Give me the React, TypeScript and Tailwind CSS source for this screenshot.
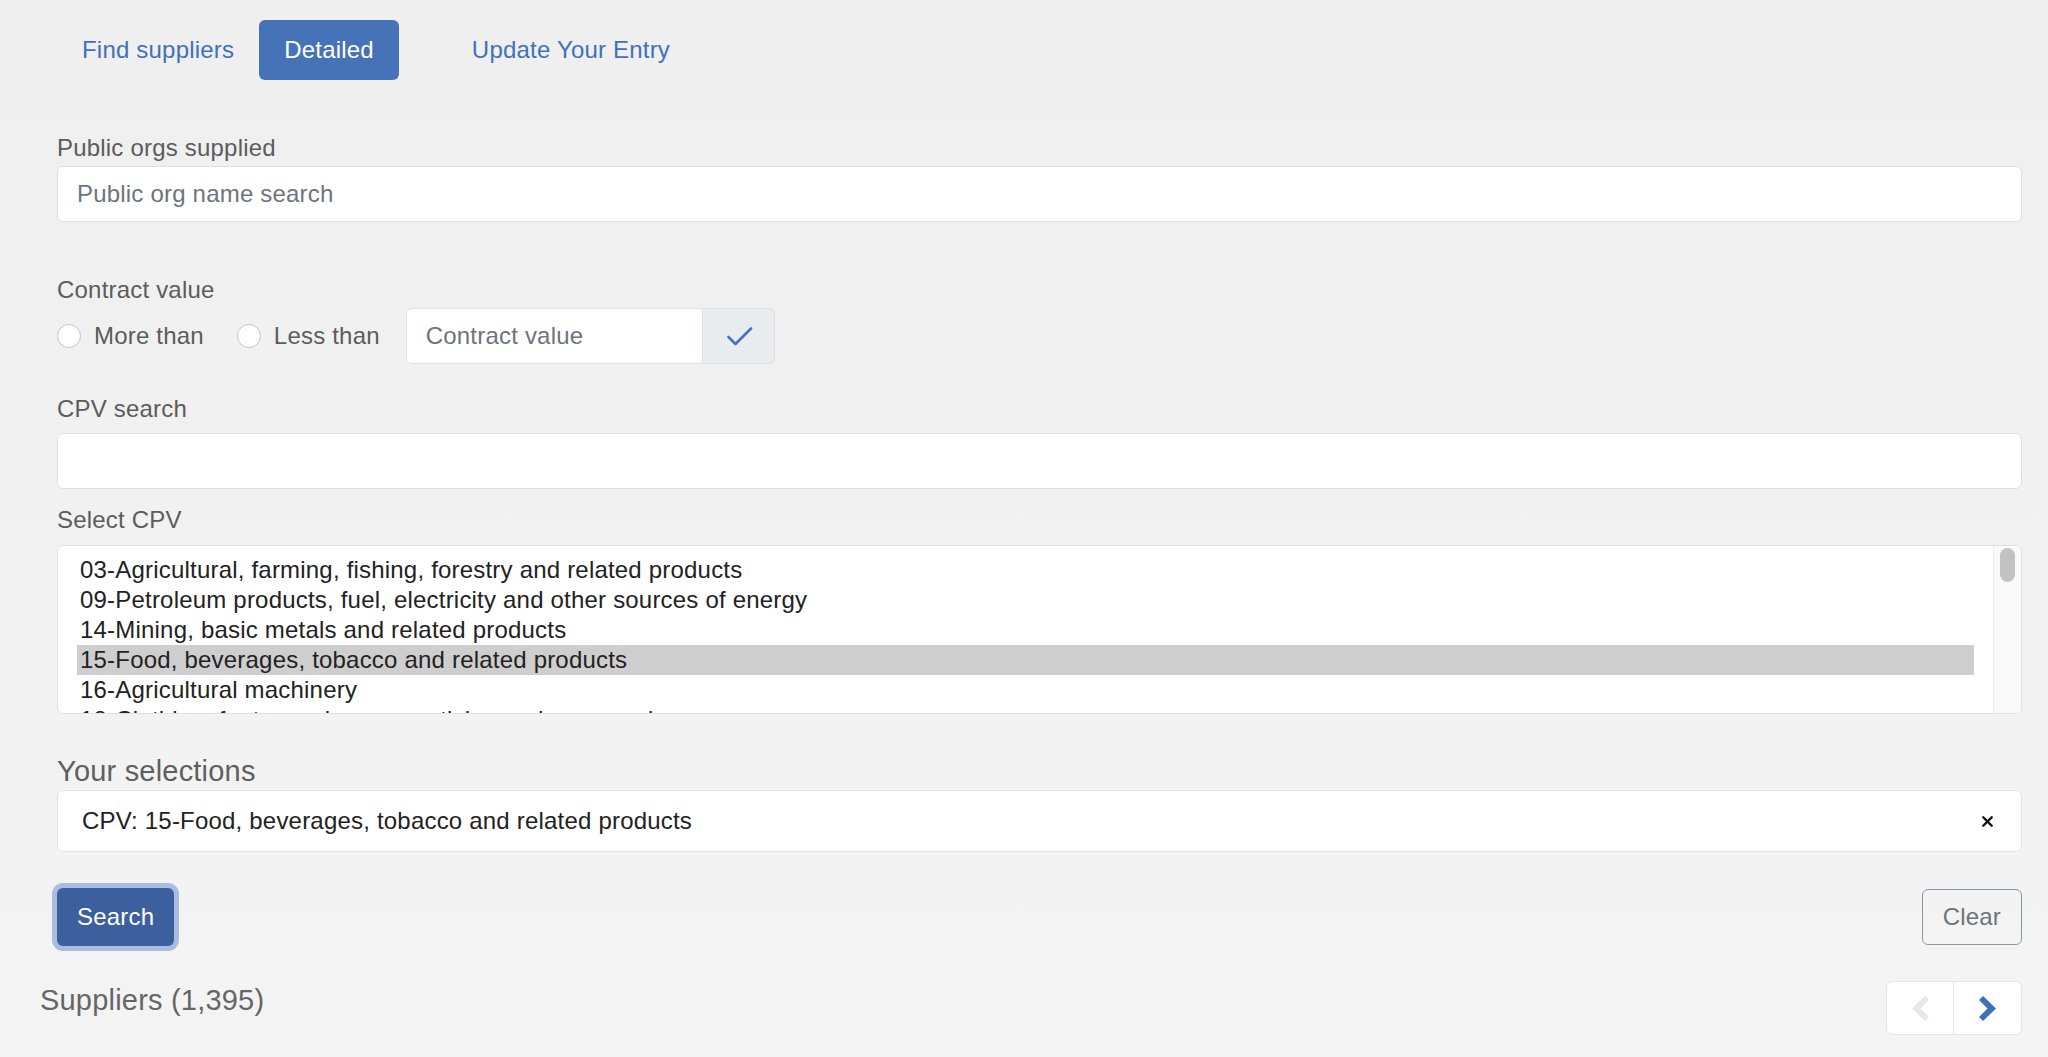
import { X } from "lucide-react";

const cpvItems = [
  "03-Agricultural, farming, fishing, forestry and related products",
  "09-Petroleum products, fuel, electricity and other sources of energy",
  "14-Mining, basic metals and related products",
  "15-Food, beverages, tobacco and related products",
  "16-Agricultural machinery",
  "18-Clothing, footwear, luggage articles and accessories",
  "19-Leather and textile fabrics, plastic and rubber materials",
  "22-Printed matter and related products",
];

function Chevron({ dir, color }: { dir: "left" | "right"; color: string }) {
  return (
    <svg width="17" height="25" viewBox="0 0 17 25" className={dir === "left" ? "-scale-x-100" : ""}>
      <polygon points="4,0 17,12.5 4,25 0,21 8.5,12.5 0,4" fill={color} />
    </svg>
  );
}

function Radio({ label }: { label: string }) {
  return (
    <label className="flex items-center gap-[13px] text-[#5c5c5c]">
      <span className="w-[24px] h-[24px] rounded-full bg-white border border-[#c4c4c4]" />
      <span>{label}</span>
    </label>
  );
}

export default function App() {
  return (
    <main className="min-h-screen w-full bg-linear-to-b from-[#efefef] to-[#f4f4f4] font-['Liberation_Sans',Arial,sans-serif] text-[24px] leading-[36px] tracking-[0.2px] pl-[40px] pr-[26px] pt-[20px]">
      <div className="pl-[17px]">
        {/* tabs */}
        <nav className="flex items-center h-[60px]">
          <a className="h-full flex items-center px-[25px] text-[#4170bd]">Find suppliers</a>
          <a className="h-full flex items-center px-[25px] rounded-[6px] bg-[#4672b8] text-white">Detailed</a>
          <a className="h-full flex items-center px-[25px] ml-[48px] text-[#4170bd]">Update Your Entry</a>
        </nav>

        <div className="mt-[50px] text-[#5c5c5c]">Public orgs supplied</div>
        <input
          className="block w-full h-[56px] px-[19px] bg-white border border-[#dde0e4] rounded-[6px] outline-none placeholder:text-[#6c757d]"
          placeholder="Public org name search"
        />

        <div className="mt-[50px] text-[#5c5c5c]">Contract value</div>
        <div className="flex items-center h-[56px]">
          <Radio label="More than" />
          <div className="ml-[33px]">
            <Radio label="Less than" />
          </div>
          <div className="ml-[26px] flex h-full">
            <input
              className="w-[297px] h-full px-[19px] bg-white border border-[#dde0e4] rounded-l-[6px] outline-none placeholder:text-[#6c757d]"
              placeholder="Contract value"
            />
            <button className="w-[72px] h-full flex items-center justify-center bg-[#e9ecef] border border-l-0 border-[#dde0e4] rounded-r-[6px]">
              <svg width="26" height="19" viewBox="0 0 26 19" fill="none" className="ml-[4px]">
                <path d="M1.5 10 L8.5 17 L24 1.5" stroke="#4472c4" strokeWidth="2.6" strokeLinecap="round" strokeLinejoin="round" />
              </svg>
            </button>
          </div>
        </div>

        <div className="mt-[27px] text-[#5c5c5c]">CPV search</div>
        <input className="block mt-[6px] w-full h-[56px] px-[19px] bg-white border border-[#dde0e4] rounded-[6px] outline-none" />

        <div className="mt-[13px] text-[#5c5c5c]">Select CPV</div>
        <div className="mt-[7px] flex h-[169px] bg-white border border-[#dde0e4] rounded-[6px] overflow-hidden">
          <ul className="flex-1 pt-[9px] pl-[19px] pr-[19px] leading-[30px] text-[#222] overflow-hidden">
            {cpvItems.map((item) => (
              <li key={item} className={`px-[3px] whitespace-nowrap ${item.startsWith("15-") ? "bg-[#cecece]" : ""}`}>
                {item}
              </li>
            ))}
          </ul>
          <div className="w-[28px] border-l border-[#ececec] bg-[#fafafa] flex justify-center pt-[2px]">
            <div className="w-[15px] h-[34px] rounded-full bg-[#c2c2c2]" />
          </div>
        </div>

        <div className="mt-[40px] text-[29px] leading-[35px] text-[#5f5f5f]">Your selections</div>
        <div className="mt-[1px] h-[62px] flex items-center justify-between pl-[24px] pr-[25px] bg-white border border-[#e3e3e3] rounded-[6px] text-[#222]">
          <span>CPV: 15-Food, beverages, tobacco and related products</span>
          <X size={17} strokeWidth={3.4} color="#111" />
        </div>

        <div className="mt-[36px] flex items-center justify-between">
          <button className="h-[58px] px-[20px] rounded-[6px] bg-[#3c5f9d] text-white shadow-[0_0_0_5px_#a9bde0]">Search</button>
          <button className="h-[56px] px-[20px] rounded-[6px] border border-[#8d959d] text-[#6c757d]">Clear</button>
        </div>
      </div>

      <div className="mt-[35px] flex items-center justify-between">
        <h2 className="text-[29px] leading-[35px] text-[#666] -mt-[16px]">Suppliers (1,395)</h2>
        <div className="flex h-[54px] bg-white border border-[#e4e4e4] rounded-[6px]">
          <button className="w-[67px] flex items-center justify-center border-r border-[#e4e4e4]">
            <Chevron dir="left" color="#e8e8e8" />
          </button>
          <button className="w-[67px] flex items-center justify-center">
            <Chevron dir="right" color="#3f6fba" />
          </button>
        </div>
      </div>
    </main>
  );
}
